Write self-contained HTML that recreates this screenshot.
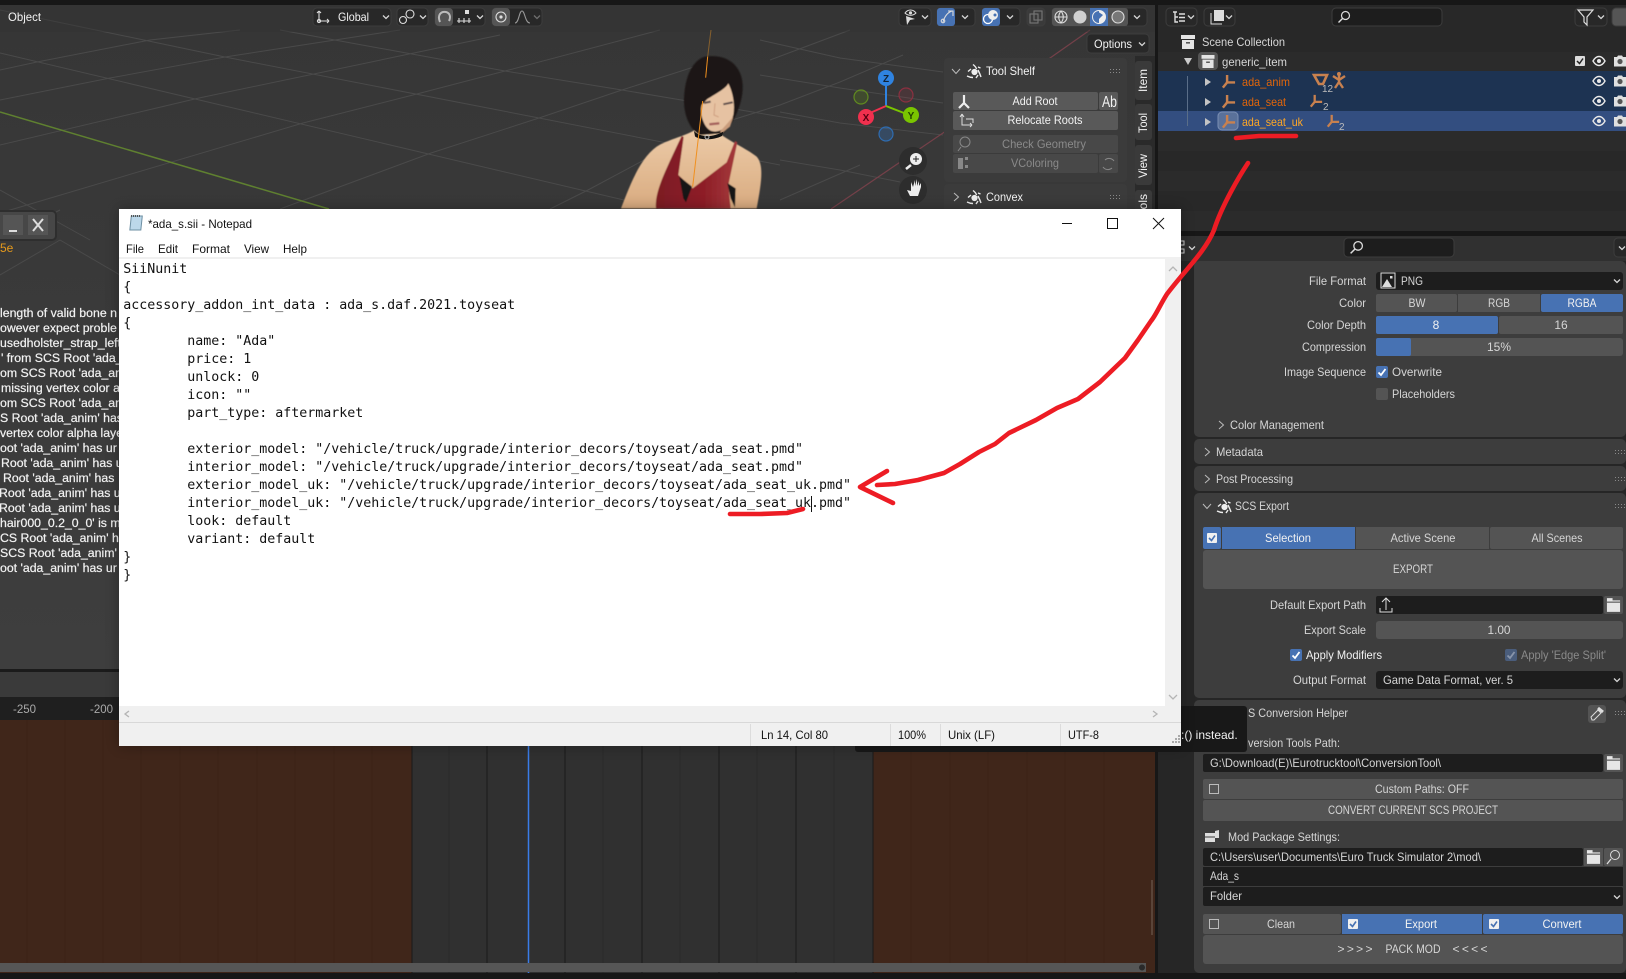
<!DOCTYPE html>
<html><head><meta charset="utf-8"><title>Blender and Notepad</title>
<style>
html,body{margin:0;padding:0;background:#171717;width:1626px;height:979px;overflow:hidden}
svg{position:absolute;left:0;top:0;display:block}
text{font-family:"Liberation Sans",sans-serif;font-size:12px;fill:#d6d6d6}
.r{text-anchor:end}.c{text-anchor:middle}
.w{fill:#f2f2f2}.d{fill:#8a8a8a}
.con{font-size:12.3px;fill:#f2f2f2;stroke:#f2f2f2;stroke-width:.2px}
.np{fill:#111;font-size:12px}
.code{font-family:"DejaVu Sans Mono","Liberation Mono",monospace;font-size:13.29px;fill:#111;white-space:pre}
.ln{stroke:#4a4a4a;stroke-width:1;fill:none}
</style></head><body>
<svg width="1626" height="979" viewBox="0 0 1626 979" xmlns="http://www.w3.org/2000/svg">
<defs>
<symbol id="chev" viewBox="0 0 10 10"><path d="M2 3.5L5 6.5L8 3.5" fill="none" stroke="#d6d6d6" stroke-width="1.3"/></symbol>
<symbol id="chr" viewBox="0 0 10 10"><path d="M3 1L7.5 5L3 9" fill="none" stroke="#bbb" stroke-width="1"/></symbol>
<symbol id="chd" viewBox="0 0 10 10"><path d="M1 3L5 7.5L9 3" fill="none" stroke="#bbb" stroke-width="1"/></symbol>
<symbol id="arm" viewBox="0 0 16 16"><path d="M6.5 9V1M6.5 9H15M6.5 9L2 14.5" fill="none" stroke="#c8814f" stroke-width="2.6"/></symbol>
<symbol id="folder" viewBox="0 0 16 14" preserveAspectRatio="none"><path d="M1 1H7V3H15V13H1Z" fill="#e6e6e6"/><path d="M1 4.5H15" stroke="#555" stroke-width="1"/></symbol>
<symbol id="check" viewBox="0 0 12 12"><path d="M2.5 6.5L5 9L9.5 3" fill="none" stroke="#fff" stroke-width="1.8"/></symbol>
<symbol id="grip" viewBox="0 0 12 6"><path d="M1 1h1v1H1zM4 1h1v1H4zM7 1h1v1H7zM10 1h1v1h-1zM1 4h1v1H1zM4 4h1v1H4zM7 4h1v1H7zM10 4h1v1h-1z" fill="#8a8a8a"/></symbol>
<symbol id="scs" viewBox="0 0 16 16"><g fill="none" stroke="#eee" stroke-width="1.4"><circle cx="8.5" cy="9" r="2.4" fill="#eee"/><path d="M7 1.5C9 3 10 4 10.5 6M1 13C3 14 5 14.5 7 14.5M15 14C14 11 13 9 12 7M2 8.5L5 6M14.5 5L12 4M10 15L12 12"/></g></symbol>
<symbol id="eye" viewBox="0 0 14 14"><path d="M1 7C3 3.5 5 2.5 7 2.5S11 3.5 13 7C11 10.5 9 11.5 7 11.5S3 10.5 1 7Z" fill="none" stroke="#e8e8e8" stroke-width="1.4"/><circle cx="7" cy="7" r="2" fill="#e8e8e8"/></symbol>
<symbol id="cam" viewBox="0 0 14 14"><path d="M1 3H4L5 1.5H9L10 3H13V12.5H1Z" fill="#e0e0e0"/><circle cx="7" cy="7.5" r="2.6" fill="#555"/></symbol>
<symbol id="coll" viewBox="0 0 14 14"><path d="M0 0H14V4H0ZM1 5H13V14H1Z" fill="#e4e4e4"/><rect x="5" y="7" width="4" height="1.6" fill="#555"/></symbol>
<symbol id="mag" viewBox="0 0 14 14"><circle cx="8.5" cy="5.5" r="4" fill="none" stroke="#ddd" stroke-width="1.2"/><path d="M5.5 8.5L1.5 12.5" stroke="#ddd" stroke-width="1.4"/></symbol>
<linearGradient id="vg" x1="0" y1="0" x2="0" y2="1"><stop offset="0" stop-color="#363636"/><stop offset="1" stop-color="#3e3e3e"/></linearGradient>
<linearGradient id="dr" x1="0" y1="0" x2="1" y2="0"><stop offset="0" stop-color="#7c1a24"/><stop offset=".6" stop-color="#8e1f28"/><stop offset="1" stop-color="#a53a3c"/></linearGradient>
<linearGradient id="sk" x1="0" y1="0" x2="0" y2="1"><stop offset="0" stop-color="#eccba8"/><stop offset="1" stop-color="#d9ab80"/></linearGradient>
<filter id="bl"><feGaussianBlur stdDeviation="1.6"/></filter>
<filter id="sh" x="-5%" y="-5%" width="110%" height="112%"><feGaussianBlur stdDeviation="7"/></filter>
</defs>

<!-- base -->
<rect width="1626" height="979" fill="#171717"/>
<!-- viewport -->
<rect x="0" y="5" width="1155" height="665" fill="url(#vg)"/>
<g class="ln">
<path d="M0 53L700 218M0 10L225 57L539 118L780 165M280 30L505 71L622 90L800 120M0 100L110 78L225 57L400 30M0 145L199 98L309 75L500 35M0 213L303 123L413 95L505 71L660 30M280 209L431 153L539 118L622 90L700 65M550 209L588 190L700 130L780 105M0 70L37 62L150 40L240 30M0 240L60 210M0 190L90 240M60 240L120 275M0 275L60 240M840 58L943 72M840 88L943 103M840 123L943 135M840 170L900 182M780 105L840 82L903 55M760 40L840 58M760 75L840 88M780 112L840 123M780 160L840 170M780 200L860 165M770 60L850 30"/>
</g>
<path d="M0 112L329 209" stroke="#5f8030" stroke-width="1.5" fill="none"/>
<path d="M831 209L943 133L1090 30" stroke="#744049" stroke-width="1.2" fill="none"/>
<!-- viewport header -->
<rect x="0" y="5" width="1155" height="27" fill="#333" opacity=".45"/>
<text x="8" y="21" class="w" textLength="33" lengthAdjust="spacingAndGlyphs">Object</text>
<g fill="#282828" stroke="#3d3d3d">
<rect x="313" y="8" width="78" height="18" rx="4"/><rect x="397" y="8" width="31" height="18" rx="4"/><rect x="435" y="8" width="50" height="18" rx="4"/><rect x="492" y="8" width="50" height="18" rx="4"/>
<rect x="899" y="8" width="32" height="18" rx="4"/><rect x="937" y="8" width="38" height="18" rx="4"/><rect x="982" y="8" width="38" height="18" rx="4"/><rect x="1027" y="8" width="18" height="18" rx="4" fill="#3a3a3a"/><rect x="1052" y="8" width="95" height="18" rx="4"/><rect x="1087" y="34" width="62" height="19" rx="4"/>
</g>
<rect x="435" y="8" width="18" height="18" rx="4" fill="#555"/><rect x="492" y="8" width="18" height="18" rx="4" fill="#555"/>
<rect x="937" y="8" width="18" height="18" rx="3" fill="#4772b3"/><rect x="982" y="8" width="18" height="18" rx="3" fill="#4772b3"/>
<rect x="1052" y="8" width="76" height="18" rx="3" fill="#545454"/><rect x="1090" y="8" width="18" height="18" fill="#4772b3"/>
<circle cx="1118" cy="17" r="6" fill="#777"/>
<g fill="none" stroke="#ddd" stroke-width="1.1">
<path d="M319 11V21H329M319 11L317 13M319 11L321 13M329 21L327 19M329 21L327 23"/><circle cx="319" cy="21" r="1.6"/>
<circle cx="403" cy="20" r="3.5"/><circle cx="410" cy="14" r="4"/>
<path d="M440 22C437 15 441 11 446 12C450 13 451 17 449 21" stroke-width="2" stroke="#bbb"/>
<path d="M457 21H471M459 18V23M464 18V23M469 18V23"/>
<circle cx="501" cy="17" r="5"/><path d="M515 23C519 23 519 11 522 11C525 11 525 23 530 23" stroke="#999"/>
<path d="M943 22C945 15 949 12 952 11M948 11H953V16"/><circle cx="943" cy="21" r="1.800"/>
<circle cx="1061" cy="17" r="6"/><path d="M1055 17H1067M1061 11C1058 15 1058 19 1061 23M1061 11C1064 15 1064 19 1061 23"/>
<circle cx="1118" cy="17" r="6"/>
<rect x="1030" y="14" width="8" height="9" stroke="#777"/><rect x="1034" y="11" width="8" height="9" stroke="#777"/>
</g>
<rect x="465" y="10" width="4" height="4" fill="#ddd"/><circle cx="501" cy="17" r="1.6" fill="#ddd"/>
<circle cx="1080" cy="17" r="6.5" fill="#d0d0d0"/>
<circle cx="1099" cy="17" r="6.5" fill="#eee"/><path d="M1099 10.500A6.500 6.500 0 0 0 1099 23.500Z" fill="#4772b3"/><path d="M1097 11L1103 15L1098 20Z" fill="#4772b3"/><circle cx="1099" cy="17" r="6.500" fill="none" stroke="#eee"/>
<circle cx="988" cy="19" r="4.5" fill="none" stroke="#fff" stroke-width="1.3"/><circle cx="993" cy="15" r="5" fill="#eee"/><circle cx="995" cy="15" r="1.5" fill="#4772b3"/>
<path d="M905 13C908 9 913 9 916 13C913 16 908 16 905 13Z" fill="none" stroke="#ddd"/><circle cx="910.500" cy="12.800" r="1.600" fill="#ddd"/><path d="M906 16L915 19L910 20L907 25Z" fill="#ddd"/>
<text x="338" y="21" class="w" textLength="31" lengthAdjust="spacingAndGlyphs">Global</text>
<use href="#chev" x="381" y="12" width="10" height="10"/><use href="#chev" x="418" y="12" width="10" height="10"/><use href="#chev" x="475" y="12" width="10" height="10"/><use href="#chev" x="532" y="12" width="10" height="10" opacity=".4"/><use href="#chev" x="920" y="12" width="10" height="10"/><use href="#chev" x="960" y="12" width="10" height="10"/><use href="#chev" x="1005" y="12" width="10" height="10"/><use href="#chev" x="1132" y="12" width="10" height="10"/><use href="#chev" x="1137" y="39" width="10" height="10"/>
<text x="1094" y="48" class="w" textLength="38" lengthAdjust="spacingAndGlyphs">Options</text>

<!-- character -->
<g transform="translate(620 25) scale(.33333)">
<g filter="url(#bl)">
<path d="M3 550C30 480 60 400 110 365C140 345 190 335 225 315L300 325C320 345 380 370 410 395C432 420 425 470 410 550Z" fill="url(#sk)"/>
<path d="M108 550C105 500 130 450 185 333L191 336L175 450L218 490L320 412L345 348L352 352L325 480L332 550Z" fill="url(#dr)"/>
<path d="M178 455L216 485L198 532L190 520ZM322 474L347 490L345 548L332 520Z" fill="#141414"/>
<path d="M255 95C320 85 365 120 368 180C370 230 345 290 310 325L240 330C210 315 190 270 192 220C195 150 220 105 255 95Z" fill="#1e1816"/>
<path d="M262 222C290 205 318 190 325 175C340 205 345 240 340 270C330 305 300 325 275 318C250 310 238 260 245 240Z" fill="#e6c2a2"/>
<path d="M252 234L272 230M310 238L338 232" stroke="#5a4a48" stroke-width="6"/><path d="M285 235L282 270L296 276" fill="none" stroke="#cf9f80" stroke-width="3"/><path d="M268 298L298 295" stroke="#a5605c" stroke-width="7"/>
<path d="M300 320L340 275L330 305L305 325Z" fill="#c99c7c"/>
</g>
<path d="M222 318C240 338 280 338 310 320L306 333C280 346 240 346 225 334Z" fill="#111"/><circle cx="261" cy="336" r="6" fill="none" stroke="#bbb" stroke-width="3"/>
<path d="M273 15L263 95" stroke="#86602e" stroke-width="3"/><path d="M263 95L257 158M248 228L218 485" stroke="#f0901f" stroke-width="3"/>
</g>

<!-- gizmo -->
<path d="M886 106V86" stroke="#2f83e0" stroke-width="2"/><path d="M886 106L870 113" stroke="#f0304e" stroke-width="2"/><path d="M886 106L904 113" stroke="#7ac500" stroke-width="2"/>
<circle cx="886" cy="78" r="8" fill="#2f83e0"/><circle cx="866" cy="117" r="8" fill="#f0304e"/><circle cx="911" cy="115" r="8" fill="#7ac500"/>
<circle cx="886" cy="134" r="7" fill="#2f83e0" fill-opacity=".25" stroke="#2f6cb0" stroke-width="1.2"/><circle cx="906" cy="95" r="7" fill="#f0304e" fill-opacity=".1" stroke="#8a3040" stroke-width="1.2"/><circle cx="861" cy="97" r="7" fill="#7ac500" fill-opacity=".15" stroke="#608a20" stroke-width="1.2"/>
<text x="886" y="82" class="c" style="font-weight:bold;font-size:10px;fill:#123">Z</text><text x="866" y="121" class="c" style="font-weight:bold;font-size:10px;fill:#501">X</text><text x="911" y="119" class="c" style="font-weight:bold;font-size:10px;fill:#240">Y</text>
<circle cx="913" cy="161" r="14" fill="#2d2d2d"/><circle cx="913" cy="190" r="14" fill="#2d2d2d"/>
<circle cx="916" cy="159" r="6" fill="#eee"/><path d="M911 165L906 169" stroke="#eee" stroke-width="2.500"/><path d="M916 156V162M913 159H919" stroke="#222"/>
<path d="M907 190L910 196H918L921 187V183L919 186V181L917 186V179L915 186V180L913 187L911 182V191Z" fill="#eee"/>

<!-- sidebar tabs -->
<rect x="1135" y="56" width="20" height="154" fill="#2a2a2a"/>
<g fill="#3a3a3a"><rect x="1135" y="61" width="17" height="39" rx="3"/><rect x="1135" y="104" width="17" height="36" rx="3"/><rect x="1135" y="145" width="17" height="40" rx="3"/><rect x="1135" y="190" width="17" height="30" rx="3"/></g>
<text transform="translate(1147 92) rotate(-90)" class="w" textLength="23" lengthAdjust="spacingAndGlyphs">Item</text><text transform="translate(1147 133) rotate(-90)" class="w" textLength="20" lengthAdjust="spacingAndGlyphs">Tool</text><text transform="translate(1147 178) rotate(-90)" class="w" textLength="24" lengthAdjust="spacingAndGlyphs">View</text><text transform="translate(1147 222) rotate(-90)" class="w">Tools</text>
<rect x="944" y="58" width="183" height="124" rx="4" fill="#3b3b3b"/><rect x="944" y="184" width="183" height="40" rx="4" fill="#3b3b3b"/>
<use href="#chd" x="951" y="66" width="10" height="10"/><use href="#chr" x="951" y="192" width="10" height="10"/>
<use href="#scs" x="966" y="63" width="16" height="16"/><use href="#scs" x="966" y="189" width="16" height="16"/>
<text x="986" y="75" class="w" textLength="49" lengthAdjust="spacingAndGlyphs">Tool Shelf</text><text x="986" y="201" class="w" textLength="37" lengthAdjust="spacingAndGlyphs">Convex</text>
<use href="#grip" x="1109" y="68" width="12" height="6"/><use href="#grip" x="1109" y="194" width="12" height="6"/>
<rect x="953" y="92" width="145" height="18" rx="2" fill="#595959"/><rect x="1099" y="92" width="19" height="18" rx="2" fill="#595959"/><rect x="953" y="111" width="165" height="19" rx="2" fill="#595959"/>
<rect x="953" y="135" width="165" height="18" rx="2" fill="#484848"/><rect x="953" y="154" width="145" height="19" rx="2" fill="#484848"/><rect x="1099" y="154" width="19" height="19" rx="2" fill="#484848"/>
<text x="1035" y="105" class="c w" textLength="45" lengthAdjust="spacingAndGlyphs">Add Root</text><text x="1045" y="124" class="c w" textLength="75" lengthAdjust="spacingAndGlyphs">Relocate Roots</text><text x="1044" y="148" class="c d" textLength="84" lengthAdjust="spacingAndGlyphs">Check Geometry</text><text x="1035" y="167" class="c d" textLength="48" lengthAdjust="spacingAndGlyphs">VColoring</text>
<text x="1102" y="107" style="font-size:16px" class="w" textLength="15" lengthAdjust="spacingAndGlyphs">Ab</text>
<path d="M964 95V103M964 103L959 108M964 103L969 108" stroke="#eee" stroke-width="2.200" fill="none"/>
<path d="M962 114V125H972M962 114L960 117M962 114L964 117M972 125L970 123M972 125L970 127M966 119H973V123" stroke="#ddd" fill="none"/>
<circle cx="965" cy="142" r="5" fill="none" stroke="#888"/><path d="M961 147L958 151" stroke="#888"/><rect x="958" y="158" width="5" height="11" fill="#888"/><path d="M965 157h3v3h-3zM965 165h3v3h-3z" fill="#888"/><path d="M1105 160A6 6 0 0 1 1114 161M1112 168A6 6 0 0 1 1103 167" fill="none" stroke="#888"/>

<!-- left floating -->
<rect x="-4" y="211" width="60" height="29" rx="4" fill="#474747" stroke="#2e2e2e" stroke-width="2"/>
<rect x="3" y="215" width="20" height="20" fill="#555"/><rect x="28" y="215" width="20" height="20" fill="#555"/>
<path d="M9 231H17" stroke="#ddd" stroke-width="2"/><path d="M33 219L43 231M43 219L33 231" stroke="#ddd" stroke-width="2"/>
<text x="0" y="252" style="fill:#e69a1c;font-size:12px">5e</text>
<g>
<text class="con" x="0" y="317">length of valid bone n</text><text class="con" x="0" y="332">owever expect proble</text><text class="con" x="0" y="347">usedholster_strap_left</text><text class="con" x="1" y="362">' from SCS Root 'ada_</text><text class="con" x="0" y="377">om SCS Root 'ada_ani</text><text class="con" x="1" y="392">missing vertex color a</text><text class="con" x="0" y="407">om SCS Root 'ada_ani</text><text class="con" x="0" y="422">S Root 'ada_anim' has</text><text class="con" x="0" y="437">vertex color alpha laye</text><text class="con" x="0" y="452">oot 'ada_anim' has ur</text><text class="con" x="1" y="467">Root 'ada_anim' has u</text><text class="con" x="3" y="482">Root 'ada_anim' has</text><text class="con" x="-1" y="497">Root 'ada_anim' has u</text><text class="con" x="-1" y="512">Root 'ada_anim' has ur</text><text class="con" x="0" y="527">hair000_0.2_0_0' is m</text><text class="con" x="0" y="542">CS Root 'ada_anim' ha</text><text class="con" x="0" y="557">SCS Root 'ada_anim' h</text><text class="con" x="0" y="572">oot 'ada_anim' has ur</text>
</g>

<!-- timeline -->
<rect x="0" y="669" width="1155" height="3" fill="#1b1b1b"/>
<rect x="0" y="672" width="1155" height="25" fill="#3a3a3a"/>
<rect x="0" y="697" width="1155" height="23" fill="#1f1f1f"/>
<text x="13" y="713" style="fill:#aaa" textLength="23" lengthAdjust="spacingAndGlyphs">-250</text><text x="90" y="713" style="fill:#aaa" textLength="23" lengthAdjust="spacingAndGlyphs">-200</text>
<rect x="0" y="720" width="1155" height="253" fill="#40261a"/>
<rect x="412" y="720" width="461" height="253" fill="#303030"/>
<path d="M27 720V973M65 720V973M103 720V973M141 720V973M180 720V973M218 720V973M257 720V973M295 720V973M334 720V973M372 720V973M911 720V973M950 720V973M988 720V973M1027 720V973M1065 720V973M1104 720V973" stroke="#3c2317"/>
<path d="M449 720V973M603 720V973M680 720V973M757 720V973M834 720V973" stroke="#2a2a2a"/>
<path d="M412 720V973M487 720V973M565 720V973M642 720V973M719 720V973M796 720V973M873 720V973" stroke="#1a1a1a"/>
<path d="M528.500 720V973" stroke="#3a7ce8" stroke-width="1.500"/>
<rect x="0" y="963" width="1146" height="9" fill="#565656"/><circle cx="1142" cy="967.500" r="3" fill="#2a2a2a"/>
<rect x="1151" y="880" width="2" height="55" fill="#5a4438"/>

<!-- right column background -->
<rect x="1155" y="0" width="471" height="979" fill="#171717"/>
<!-- outliner -->
<rect x="1158" y="5" width="468" height="226" fill="#282828"/>
<rect x="1158" y="52" width="468" height="19" fill="#2b2b2b"/><rect x="1158" y="131" width="468" height="20" fill="#2b2b2b"/><rect x="1158" y="171" width="468" height="20" fill="#2b2b2b"/><rect x="1158" y="211" width="468" height="20" fill="#2b2b2b"/>
<rect x="1158" y="71" width="468" height="40" fill="#1d3352"/><rect x="1158" y="111" width="468" height="20" fill="#334e80"/>
<g fill="#282828" stroke="#3d3d3d"><rect x="1166" y="8" width="31" height="18" rx="4"/><rect x="1204" y="8" width="31" height="18" rx="4"/><rect x="1332" y="8" width="110" height="18" rx="4" fill="#1d1d1d"/><rect x="1575" y="8" width="32" height="18" rx="4"/><rect x="1612" y="8" width="20" height="18" rx="4" fill="#555"/></g>
<use href="#mag" x="1337" y="10" width="14" height="14"/>
<path d="M1173 12H1177M1175 12V22H1178M1175 17H1178M1179 14H1185M1179 21H1185M1179 17.500H1185" stroke="#ddd" stroke-width="1.400" fill="none"/>
<rect x="1214" y="10" width="10" height="11" fill="#ddd"/><path d="M1211 13V24H1222" fill="none" stroke="#ddd"/>
<path d="M1578 10H1593L1587 17V25L1584 22V17Z" fill="none" stroke="#ddd" stroke-width="1.200"/>
<use href="#chev" x="1186" y="12" width="10" height="10"/><use href="#chev" x="1224" y="12" width="10" height="10"/><use href="#chev" x="1596" y="12" width="10" height="10"/>
<use href="#coll" x="1181" y="35" width="14" height="14"/><text x="1202" y="46" textLength="83" lengthAdjust="spacingAndGlyphs">Scene Collection</text>
<rect x="1198" y="52" width="20" height="18" rx="4" fill="#555"/><use href="#coll" x="1201" y="55" width="14" height="13"/>
<path d="M1184 58H1192L1188 65Z" fill="#ccc"/><text x="1222" y="66" textLength="65" lengthAdjust="spacingAndGlyphs">generic_item</text>
<rect x="1575" y="56" width="10" height="10" rx="1" fill="#ddd"/><path d="M1577 61L1579.500 63.500L1583 58.500" fill="none" stroke="#222" stroke-width="1.500"/>
<path d="M1187.500 76V126" stroke="#5a6e88"/>
<path d="M1205 78L1211 82L1205 86ZM1205 98L1211 102L1205 106ZM1205 118L1211 122L1205 126Z" fill="#c4c4c4"/>
<use href="#arm" x="1221" y="74" width="15" height="15"/><use href="#arm" x="1221" y="94" width="15" height="15"/>
<rect x="1218" y="112" width="20" height="18" rx="4" fill="#5a719a" stroke="#7b8fb3"/><use href="#arm" x="1221" y="114" width="15" height="15"/>
<text x="1242" y="86" style="fill:#e2660a" textLength="48" lengthAdjust="spacingAndGlyphs">ada_anim</text><text x="1242" y="106" style="fill:#e2660a" textLength="44" lengthAdjust="spacingAndGlyphs">ada_seat</text><text x="1242" y="126" style="fill:#ffa726" textLength="61" lengthAdjust="spacingAndGlyphs">ada_seat_uk</text>
<path d="M1314 75H1327L1323 84H1319Z" fill="none" stroke="#c8814f" stroke-width="2.600"/>
<text x="1322" y="92" style="font-size:10px;fill:#bbb">12</text>
<path d="M1339 80L1333 76M1339 80L1345 76M1339 74V82M1339 82L1335 88M1339 82L1343 88" stroke="#c8814f" stroke-width="2.400" fill="none"/><circle cx="1339" cy="74" r="2" fill="#c8814f"/>
<use href="#arm" x="1309" y="94" width="14" height="14"/><text x="1323" y="110" style="font-size:10px;fill:#bbb">2</text>
<use href="#arm" x="1326" y="114" width="14" height="14"/><text x="1339" y="130" style="font-size:10px;fill:#bbb">2</text>
<use href="#eye" x="1592" y="54" width="14" height="14"/><use href="#eye" x="1592" y="74" width="14" height="14"/><use href="#eye" x="1592" y="94" width="14" height="14"/><use href="#eye" x="1592" y="114" width="14" height="14"/>
<use href="#cam" x="1613" y="54" width="14" height="14"/><use href="#cam" x="1613" y="74" width="14" height="14"/><use href="#cam" x="1613" y="94" width="14" height="14"/><use href="#cam" x="1613" y="114" width="14" height="14"/>

<!-- properties -->
<rect x="1158" y="236" width="468" height="737" fill="#262626"/>
<rect x="1158" y="236" width="468" height="25" fill="#303030"/>
<rect x="1344" y="238" width="110" height="19" rx="4" fill="#1d1d1d" stroke="#3d3d3d"/><use href="#mag" x="1349" y="240" width="15" height="15"/>
<rect x="1614" y="238" width="20" height="19" rx="4" fill="#282828" stroke="#3d3d3d"/><use href="#chev" x="1617" y="243" width="10" height="10"/>
<use href="#chev" x="1187" y="243" width="10" height="10"/><path d="M1181 241H1184V245H1181M1181 249H1184V253H1181" fill="none" stroke="#ccc"/>
<rect x="1194" y="261" width="432" height="176" rx="5" fill="#3d3d3d"/>
<rect x="1194" y="439" width="432" height="25" rx="5" fill="#3d3d3d"/><rect x="1194" y="466" width="432" height="25" rx="5" fill="#3d3d3d"/><rect x="1194" y="493" width="432" height="205" rx="5" fill="#3d3d3d"/><rect x="1194" y="700" width="432" height="273" rx="5" fill="#3d3d3d"/>
<rect x="1376" y="272" width="247" height="18" rx="3" fill="#1d1d1d"/>
<rect x="1376" y="294" width="81" height="18" rx="2" fill="#545454"/><rect x="1458" y="294" width="82" height="18" fill="#545454"/><rect x="1541" y="294" width="82" height="18" rx="2" fill="#4772b3"/>
<rect x="1376" y="316" width="122" height="18" rx="2" fill="#4772b3"/><rect x="1499" y="316" width="124" height="18" rx="2" fill="#545454"/>
<rect x="1376" y="338" width="247" height="18" rx="3" fill="#545454"/><rect x="1376" y="338" width="35" height="18" rx="2" fill="#4772b3"/>
<text x="1366" y="285" class="r" textLength="57" lengthAdjust="spacingAndGlyphs">File Format</text><text x="1366" y="307" class="r" textLength="27" lengthAdjust="spacingAndGlyphs">Color</text><text x="1366" y="329" class="r" textLength="59" lengthAdjust="spacingAndGlyphs">Color Depth</text><text x="1366" y="351" class="r" textLength="64" lengthAdjust="spacingAndGlyphs">Compression</text><text x="1366" y="376" class="r" textLength="82" lengthAdjust="spacingAndGlyphs">Image Sequence</text>
<rect x="1381" y="273" width="14" height="15" fill="none" stroke="#ddd"/><path d="M1382 287L1387 279L1392 287Z" fill="#ddd"/><rect x="1390" y="276" width="2.500" height="2.500" fill="#ddd"/>
<text x="1401" y="285" textLength="22" lengthAdjust="spacingAndGlyphs">PNG</text><use href="#chev" x="1612" y="276" width="10" height="10"/>
<text x="1417" y="307" class="c" textLength="17" lengthAdjust="spacingAndGlyphs">BW</text><text x="1499" y="307" class="c" textLength="22" lengthAdjust="spacingAndGlyphs">RGB</text><text x="1582" y="307" class="c w" textLength="29" lengthAdjust="spacingAndGlyphs">RGBA</text><text x="1436" y="329" class="c w">8</text><text x="1561" y="329" class="c">16</text><text x="1499" y="351" class="c" textLength="24" lengthAdjust="spacingAndGlyphs">15%</text>
<rect x="1376" y="366" width="12" height="12" rx="2" fill="#4772b3"/><use href="#check" x="1376" y="366" width="12" height="12"/><text x="1392" y="376" textLength="50" lengthAdjust="spacingAndGlyphs">Overwrite</text>
<rect x="1376" y="388" width="12" height="12" rx="2" fill="#545454"/><text x="1392" y="398" textLength="63" lengthAdjust="spacingAndGlyphs">Placeholders</text>
<use href="#chr" x="1216" y="420" width="10" height="10"/><text x="1230" y="429" textLength="94" lengthAdjust="spacingAndGlyphs">Color Management</text>
<use href="#chr" x="1202" y="447" width="10" height="10"/><text x="1216" y="456" textLength="47" lengthAdjust="spacingAndGlyphs">Metadata</text><use href="#grip" x="1614" y="449" width="12" height="6"/>
<use href="#chr" x="1202" y="474" width="10" height="10"/><text x="1216" y="483" textLength="77" lengthAdjust="spacingAndGlyphs">Post Processing</text><use href="#grip" x="1614" y="476" width="12" height="6"/>
<use href="#chd" x="1202" y="501" width="10" height="10"/><use href="#scs" x="1216" y="498" width="16" height="16"/><text x="1235" y="510" textLength="54" lengthAdjust="spacingAndGlyphs">SCS Export</text><use href="#grip" x="1614" y="503" width="12" height="6"/>
<rect x="1203" y="527" width="18" height="22" rx="2" fill="#4772b3"/><rect x="1222" y="527" width="133" height="22" fill="#4772b3"/><rect x="1356" y="527" width="133" height="22" fill="#545454"/><rect x="1490" y="527" width="133" height="22" rx="2" fill="#545454"/>
<rect x="1207" y="533" width="10" height="10" rx="1" fill="#f0f0f0"/><path d="M1209 538L1211.500 540.500L1215 535.500" fill="none" stroke="#4772b3" stroke-width="1.600"/>
<text x="1288" y="542" class="c w" textLength="46" lengthAdjust="spacingAndGlyphs">Selection</text><text x="1423" y="542" class="c" textLength="65" lengthAdjust="spacingAndGlyphs">Active Scene</text><text x="1557" y="542" class="c" textLength="51" lengthAdjust="spacingAndGlyphs">All Scenes</text>
<rect x="1203" y="550" width="420" height="39" rx="3" fill="#545454"/><text x="1413" y="573" class="c" textLength="40" lengthAdjust="spacingAndGlyphs">EXPORT</text>
<text x="1366" y="609" class="r" textLength="96" lengthAdjust="spacingAndGlyphs">Default Export Path</text><rect x="1376" y="596" width="227" height="18" rx="2" fill="#1d1d1d"/><rect x="1604" y="596" width="19" height="18" rx="2" fill="#545454"/><use href="#folder" x="1606" y="597" width="15" height="16"/>
<path d="M1386 610V598M1382 602L1386 598L1390 602M1380 608V612H1392V608" fill="none" stroke="#e0e0e0"/>
<text x="1366" y="634" class="r" textLength="62" lengthAdjust="spacingAndGlyphs">Export Scale</text><rect x="1376" y="621" width="247" height="18" rx="3" fill="#545454"/><text x="1499" y="634" class="c" textLength="23" lengthAdjust="spacingAndGlyphs">1.00</text>
<rect x="1290" y="649" width="12" height="12" rx="2" fill="#4772b3"/><use href="#check" x="1290" y="649" width="12" height="12"/><text x="1306" y="659" class="w" textLength="76" lengthAdjust="spacingAndGlyphs">Apply Modifiers</text>
<rect x="1505" y="649" width="12" height="12" rx="2" fill="#4a5d7c"/><use href="#check" x="1505" y="649" width="12" height="12" opacity=".35"/><text x="1521" y="659" class="d" textLength="85" lengthAdjust="spacingAndGlyphs">Apply 'Edge Split'</text>
<text x="1366" y="684" class="r" textLength="73" lengthAdjust="spacingAndGlyphs">Output Format</text><rect x="1376" y="671" width="247" height="18" rx="3" fill="#1d1d1d"/><text x="1383" y="684" textLength="130" lengthAdjust="spacingAndGlyphs">Game Data Format, ver. 5</text><use href="#chev" x="1612" y="675" width="10" height="10"/>
<text x="1248" y="717" textLength="100" lengthAdjust="spacingAndGlyphs">S Conversion Helper</text><rect x="1588" y="705" width="18" height="18" rx="3" fill="#545454"/><path d="M1592 720L1591 717L1598 710L1601 713L1594 720Z" fill="none" stroke="#ddd"/><path d="M1598 708L1603 712" stroke="#ddd" stroke-width="3"/><use href="#grip" x="1614" y="710" width="12" height="6"/>
<text x="1248" y="747" textLength="92" lengthAdjust="spacingAndGlyphs">version Tools Path:</text>
<rect x="1203" y="754" width="400" height="18" rx="2" fill="#1d1d1d"/><text x="1210" y="767" textLength="231" lengthAdjust="spacingAndGlyphs">G:\Download(E)\Eurotrucktool\ConversionTool\</text><rect x="1604" y="754" width="19" height="18" rx="2" fill="#545454"/><use href="#folder" x="1606" y="755" width="15" height="16"/>
<rect x="1203" y="779" width="420" height="20" rx="2" fill="#545454"/><rect x="1203" y="800" width="420" height="21" rx="2" fill="#545454"/><rect x="1209.500" y="784.500" width="9" height="9" fill="none" stroke="#bbb"/>
<text x="1422" y="793" class="c" textLength="94" lengthAdjust="spacingAndGlyphs">Custom Paths: OFF</text><text x="1413" y="814" class="c" textLength="170" lengthAdjust="spacingAndGlyphs">CONVERT CURRENT SCS PROJECT</text>
<path d="M1205 833H1215V831L1219 830V838H1215V842H1205Z" fill="#ddd"/><path d="M1205 837H1215" stroke="#3d3d3d"/>
<text x="1228" y="841" textLength="112" lengthAdjust="spacingAndGlyphs">Mod Package Settings:</text>
<rect x="1203" y="848" width="380" height="18" rx="2" fill="#1d1d1d"/><text x="1210" y="861" textLength="271" lengthAdjust="spacingAndGlyphs">C:\Users\user\Documents\Euro Truck Simulator 2\mod\</text><rect x="1584" y="848" width="19" height="18" fill="#545454"/><use href="#folder" x="1586" y="849" width="15" height="16"/><rect x="1604" y="848" width="19" height="18" rx="2" fill="#545454"/><circle cx="1615" cy="855" r="4.500" fill="none" stroke="#ddd"/><path d="M1611 859L1607 864" stroke="#ddd" stroke-width="1.300"/>
<rect x="1203" y="867" width="420" height="19" fill="#1d1d1d"/><text x="1210" y="880" textLength="29" lengthAdjust="spacingAndGlyphs">Ada_s</text><rect x="1203" y="887" width="420" height="19" rx="2" fill="#1d1d1d"/><text x="1210" y="900" textLength="32" lengthAdjust="spacingAndGlyphs">Folder</text><use href="#chev" x="1612" y="892" width="10" height="10"/>
<rect x="1203" y="914" width="138" height="20" rx="2" fill="#545454"/><rect x="1342" y="914" width="140" height="20" fill="#4772b3"/><rect x="1483" y="914" width="140" height="20" rx="2" fill="#4772b3"/>
<rect x="1209.500" y="919.500" width="9" height="9" fill="none" stroke="#bbb"/><rect x="1348" y="919" width="10" height="10" rx="1" fill="#f0f0f0"/><path d="M1350 924L1352.500 926.500L1356 921.500" fill="none" stroke="#4772b3" stroke-width="1.600"/><rect x="1489" y="919" width="10" height="10" rx="1" fill="#f0f0f0"/><path d="M1491 924L1493.500 926.500L1497 921.500" fill="none" stroke="#4772b3" stroke-width="1.600"/>
<text x="1281" y="928" class="c" textLength="28" lengthAdjust="spacingAndGlyphs">Clean</text><text x="1421" y="928" class="c w" textLength="32" lengthAdjust="spacingAndGlyphs">Export</text><text x="1562" y="928" class="c w" textLength="39" lengthAdjust="spacingAndGlyphs">Convert</text>
<rect x="1203" y="935" width="420" height="29" rx="3" fill="#545454"/><text x="1355" y="953" class="c" textLength="35">&gt;&gt;&gt;&gt;</text><text x="1413" y="953" class="c" textLength="55" lengthAdjust="spacingAndGlyphs">PACK MOD</text><text x="1470" y="953" class="c" textLength="35">&lt;&lt;&lt;&lt;</text>

<!-- tooltip -->
<rect x="855" y="706" width="392" height="46" rx="3" fill="#181818"/><text x="1181" y="739" class="w">:() instead.</text>

<!-- notepad shadow -->
<rect x="119" y="209" width="1062" height="537" fill="#000" opacity=".3" filter="url(#sh)"/>
<!-- notepad -->
<rect x="119" y="209" width="1062" height="537" fill="#fff"/>
<rect x="119" y="257" width="1062" height="2" fill="#f0f0f0"/>
<g><rect x="130" y="216" width="11" height="14" fill="#bcd8ea" stroke="#6d8fa3" transform="skewX(-6) translate(24 0)"/><path d="M131 216h10" stroke="#555" stroke-dasharray="1 1" stroke-width="2"/></g>
<text x="148" y="228" class="np" textLength="104" lengthAdjust="spacingAndGlyphs">*ada_s.sii - Notepad</text>
<text x="126" y="253" class="np" textLength="18" lengthAdjust="spacingAndGlyphs">File</text><text x="158" y="253" class="np" textLength="20" lengthAdjust="spacingAndGlyphs">Edit</text><text x="192" y="253" class="np" textLength="38" lengthAdjust="spacingAndGlyphs">Format</text><text x="244" y="253" class="np" textLength="25" lengthAdjust="spacingAndGlyphs">View</text><text x="283" y="253" class="np" textLength="24" lengthAdjust="spacingAndGlyphs">Help</text>
<path d="M1062 223.500H1072M1107.500 218.500H1117.500V228.500H1107.500ZM1153 218L1164 229M1164 218L1153 229" stroke="#111" fill="none"/>
<g class="code">
<text class="code" x="123.300" y="273">SiiNunit</text>
<text class="code" x="123.300" y="291">{</text>
<text class="code" x="123.300" y="309">accessory_addon_int_data : ada_s.daf.2021.toyseat</text>
<text class="code" x="123.300" y="327">{</text>
<text class="code" x="187.300" y="345">name: "Ada"</text>
<text class="code" x="187.300" y="363">price: 1</text>
<text class="code" x="187.300" y="381">unlock: 0</text>
<text class="code" x="187.300" y="399">icon: ""</text>
<text class="code" x="187.300" y="417">part_type: aftermarket</text>
<text class="code" x="187.300" y="453">exterior_model: "/vehicle/truck/upgrade/interior_decors/toyseat/ada_seat.pmd"</text>
<text class="code" x="187.300" y="471">interior_model: "/vehicle/truck/upgrade/interior_decors/toyseat/ada_seat.pmd"</text>
<text class="code" x="187.300" y="489">exterior_model_uk: "/vehicle/truck/upgrade/interior_decors/toyseat/ada_seat_uk.pmd"</text>
<text class="code" x="187.300" y="507">interior_model_uk: "/vehicle/truck/upgrade/interior_decors/toyseat/ada_seat_uk.pmd"</text>
<text class="code" x="187.300" y="525">look: default</text>
<text class="code" x="187.300" y="543">variant: default</text>
<text class="code" x="123.300" y="561">}</text>
<text class="code" x="123.300" y="579">}</text>
</g>
<path d="M811.500 496V512" stroke="#111"/>
<rect x="1165" y="259" width="16" height="447" fill="#f0f0f0"/><rect x="119" y="706" width="1062" height="16" fill="#f0f0f0"/><rect x="119" y="722" width="1062" height="24" fill="#f0f0f0"/><path d="M119 722.500H1181" stroke="#d8d8d8"/>
<path d="M1169 271L1173 267L1177 271M1169 695L1173 699L1177 695M129 711L125 714L129 717M1153 711L1157 714L1153 717" fill="none" stroke="#b5b5b5" stroke-width="1.300"/>
<path d="M750.500 724V746M890.500 724V746M940.500 724V746M1060.500 724V746" stroke="#dcdcdc"/>
<text x="761" y="739" class="np" textLength="67" lengthAdjust="spacingAndGlyphs">Ln 14, Col 80</text><text x="898" y="739" class="np" textLength="28" lengthAdjust="spacingAndGlyphs">100%</text><text x="948" y="739" class="np" textLength="47" lengthAdjust="spacingAndGlyphs">Unix (LF)</text><text x="1068" y="739" class="np" textLength="31" lengthAdjust="spacingAndGlyphs">UTF-8</text>
<path d="M1178 735h2v2h-2zM1175 738h2v2h-2zM1178 738h2v2h-2zM1172 741h2v2h-2zM1175 741h2v2h-2zM1178 741h2v2h-2z" fill="#aaa"/>

<!-- red annotations -->
<g fill="none" stroke="#ed1c24" stroke-width="4.600" stroke-linecap="round" stroke-linejoin="round">
<path d="M1248 163C1240 175 1222 205 1214 230C1205 252 1185 270 1167 294C1160 305 1156 315 1151 321L1138 340L1125 358L1100 382L1078 399L1057 408L1036 420L1009 433L995 444L979 452L960 464L944 473L918 480L895 484L877 485"/>
<path d="M887 471L860 487L893 503"/>
<path d="M730 514L760 514L787 513L803 509"/>
<path d="M1236 138L1259 136L1296 136"/>
</g>
</svg>
</body></html>
